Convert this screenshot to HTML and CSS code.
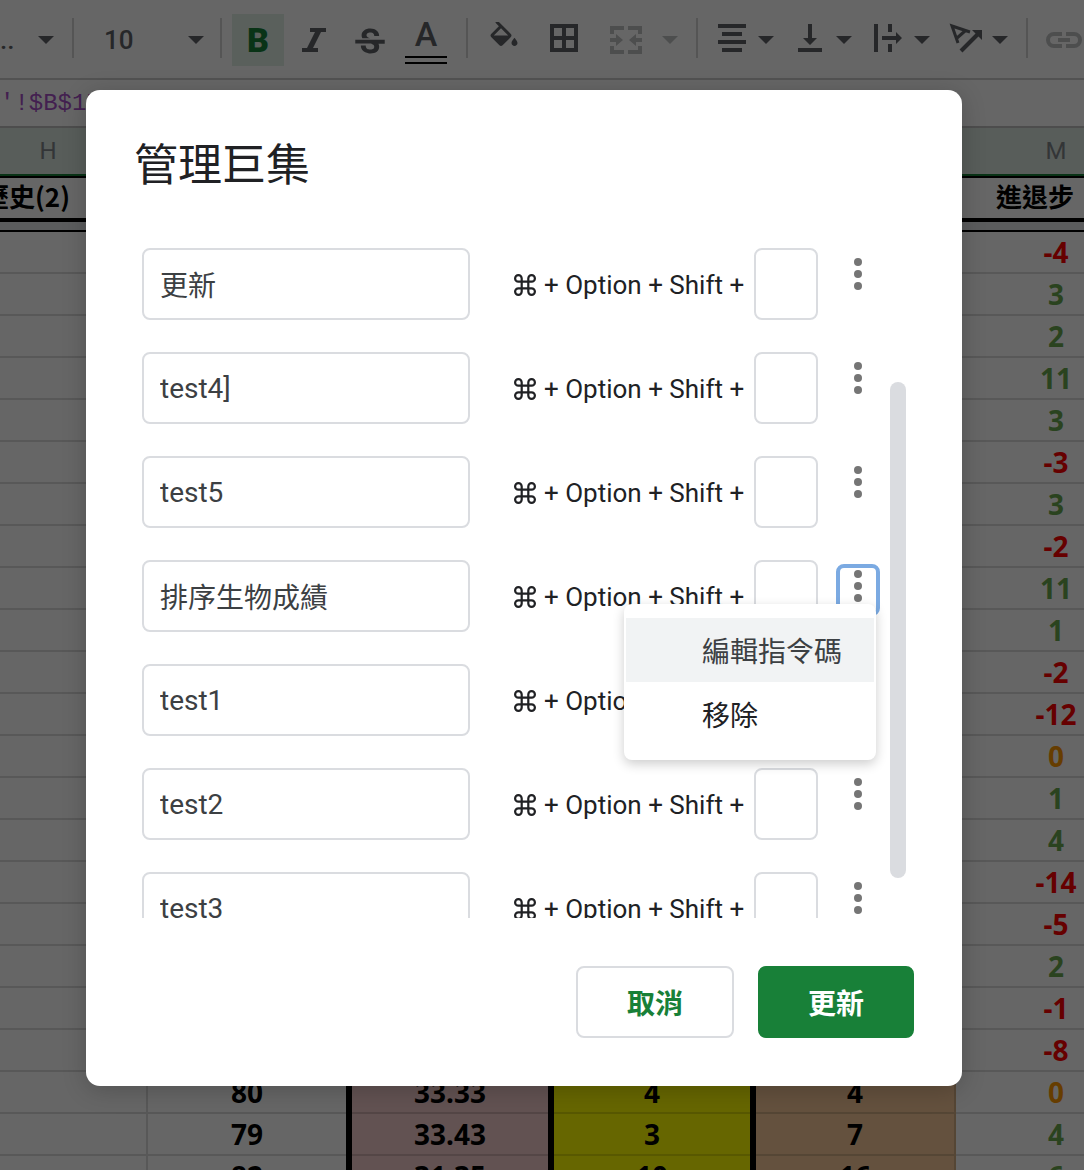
FILE: index.html
```html
<!DOCTYPE html>
<html lang="zh-Hant">
<head>
<meta charset="utf-8">
<meta name="viewport" content="width=device-width, initial-scale=1">
<title>管理巨集</title>
<link rel="stylesheet" href="styles.css">
</head>
<body>
<svg class="defs" aria-hidden="true">
  <symbol id="arrow" viewBox="0 0 16 8"><path d="M0 0h16L8 8z"/></symbol>
  <symbol id="dots" viewBox="0 0 8 32"><circle cx="4" cy="4" r="4"/><circle cx="4" cy="16" r="4"/><circle cx="4" cy="28" r="4"/></symbol>
  <symbol id="command" viewBox="2 2 20 20"><path fill="none" stroke="currentColor" stroke-width="2" d="M9 9v6h6V9zM9 9H6a3 3 0 1 1 3-3zM15 9V6a3 3 0 1 1 3 3zM15 15h3a3 3 0 1 1-3 3zM9 15v3a3 3 0 1 1-3-3z"/></symbol>
</svg>

<div class="app">
  <div class="toolbar">
    <button class="tool tool-font">..<svg class="arrow"><use href="#arrow"/></svg></button>
    <span class="sep"></span>
    <button class="tool tool-size">10<svg class="arrow"><use href="#arrow"/></svg></button>
    <span class="sep"></span>
    <div class="group group-tight">
      <button class="tool square bold">B</button>
      <button class="tool square" aria-label="斜體"><svg class="icon" viewBox="0 0 36 36"><path d="M14 6h16v4h-5l-8 16h5v4H6v-4h5l8-16h-5z"/></svg></button>
      <button class="tool square" aria-label="刪除線"><svg class="icon" viewBox="1 -1 22 22"><path d="M7.24 8.75c-.26-.48-.39-1.03-.39-1.67 0-.61.13-1.16.4-1.67.26-.5.63-.93 1.11-1.29.48-.35 1.05-.63 1.7-.83.66-.19 1.39-.29 2.18-.29.81 0 1.54.11 2.21.34.66.22 1.23.54 1.69.94.47.4.83.88 1.08 1.43s.38 1.15.38 1.81h-3.01c0-.31-.05-.59-.15-.85-.09-.27-.24-.49-.44-.68-.2-.19-.45-.33-.75-.44-.3-.1-.66-.16-1.06-.16-.39 0-.74.04-1.03.13s-.53.21-.72.36c-.19.16-.34.34-.44.55-.1.21-.15.43-.15.66 0 .48.25.88.74 1.21.38.25.77.48 1.41.7H7.39c-.05-.08-.11-.17-.15-.25zM21 12.200v-2.400H3v2.400h9.620c.18.07.4.14.55.2.37.17.66.34.87.51s.35.36.43.57c.07.2.11.43.11.69 0 .23-.05.45-.14.66-.09.2-.23.38-.42.53-.19.15-.42.26-.71.35-.29.08-.63.13-1.01.13-.43 0-.83-.04-1.18-.13s-.66-.23-.91-.42c-.25-.19-.45-.44-.59-.75s-.25-.76-.25-1.21H6.4c0 .55.08 1.13.24 1.58s.37.85.65 1.21c.28.35.6.66.98.92.37.26.78.48 1.22.65.44.17.9.3 1.38.39.48.08.96.13 1.44.13.8 0 1.53-.09 2.18-.28s1.21-.45 1.67-.79c.46-.34.82-.77 1.07-1.27s.38-1.07.38-1.71c0-.6-.1-1.14-.31-1.61-.05-.11-.11-.23-.17-.33H21z"/></svg></button>
      <button class="tool square color">A<span class="swatch"></span></button>
    </div>
    <span class="sep"></span>
    <div class="group group-fill">
      <button class="tool square" aria-label="填滿色彩"><svg class="icon" viewBox="0 1 24 24"><path d="M16.56 8.94L7.62 0 6.21 1.41l2.38 2.38-5.15 5.15c-.59.59-.59 1.54 0 2.12l5.5 5.5c.29.29.68.44 1.06.44s.77-.15 1.06-.44l5.5-5.5c.59-.58.59-1.53 0-2.12zM5.21 10L10 5.21 14.79 10H5.21zM19 11.5s-2 2.17-2 3.5c0 1.1.9 2 2 2s2-.9 2-2c0-1.33-2-3.5-2-3.5z"/></svg></button>
      <button class="tool square" aria-label="框線"><svg class="icon" viewBox="0 0 36 36"><path fill="none" stroke="currentColor" stroke-width="4" d="M6 4h24v24H6zM18 4v24M6 16h24"/></svg></button>
    </div>
    <button class="tool merge" disabled aria-label="合併儲存格"><svg class="icon" viewBox="0 0 36 36"><path d="M2 4h14v4H6v4H2zM20 4h14v8h-4V8H20zM2 24h4v4h10v4H2zM30 24h4v8H20v-4h10zM2 16h6v-4l7 6-7 6v-4H2zM34 16h-6v-4l-7 6 7 6v-4h6z"/></svg><svg class="arrow"><use href="#arrow"/></svg></button>
    <span class="sep"></span>
    <div class="group group-wide">
      <button class="tool drop" aria-label="水平對齊"><svg class="icon" viewBox="0 0 36 36"><path d="M4 2h28v4H4zM8 10h20v4H8zM4 18h28v4H4zM8 26h20v4H8z"/></svg><svg class="arrow"><use href="#arrow"/></svg></button>
      <button class="tool drop" aria-label="垂直對齊"><svg class="icon" viewBox="0 0 36 36"><path d="M16 2h4v14h5l-7 7-7-7h5zM6 26h24v4H6z"/></svg><svg class="arrow"><use href="#arrow"/></svg></button>
      <button class="tool drop" aria-label="文字換行"><svg class="icon" viewBox="0 0 36 36"><path d="M4 2h4v28H4zM18 2h4v8h-4zM18 22h4v8h-4zM12 14h14v-4l6 6-6 6v-4H12z"/></svg><svg class="arrow"><use href="#arrow"/></svg></button>
      <button class="tool drop" aria-label="文字旋轉"><svg class="icon" viewBox="0 0 36 36"><path fill="none" stroke="currentColor" stroke-width="3" d="M10 21L4 4l18 6M9 16l8-7"/><path fill="none" stroke="currentColor" stroke-width="4" d="M13 29l17-17"/><path d="M34 8v10L24 8z"/></svg><svg class="arrow"><use href="#arrow"/></svg></button>
    </div>
    <span class="sep"></span>
    <button class="tool square link" disabled aria-label="插入連結"><svg class="icon" viewBox="0 0 36 36"><path fill="none" stroke="currentColor" stroke-width="4" d="M16 12H8a6 6 0 0 0 0 12h8M20 12h8a6 6 0 0 1 0 12h-8M12 18h12"/></svg></button>
  </div>

  <div class="formula">'!$B$17</div>

  <table class="grid">
    <colgroup><col class="c-h"><col class="c-i"><col class="c-j"><col class="c-k"><col class="c-l"><col class="c-m"></colgroup>
    <thead>
      <tr class="letters"><th>H</th><th></th><th></th><th></th><th></th><th>M</th></tr>
      <tr class="titles"><th class="title-h">歷史(2)</th><th></th><th></th><th></th><th></th><th class="title-m">進退步</th></tr>
      <tr class="freeze"><th colspan="6"></th></tr>
    </thead>
    <tbody>
      <tr><td></td><td></td><td></td><td></td><td></td><td class="down">-4</td></tr>
      <tr><td></td><td></td><td></td><td></td><td></td><td class="up">3</td></tr>
      <tr><td></td><td></td><td></td><td></td><td></td><td class="up">2</td></tr>
      <tr><td></td><td></td><td></td><td></td><td></td><td class="up">11</td></tr>
      <tr><td></td><td></td><td></td><td></td><td></td><td class="up">3</td></tr>
      <tr><td></td><td></td><td></td><td></td><td></td><td class="down">-3</td></tr>
      <tr><td></td><td></td><td></td><td></td><td></td><td class="up">3</td></tr>
      <tr><td></td><td></td><td></td><td></td><td></td><td class="down">-2</td></tr>
      <tr><td></td><td></td><td></td><td></td><td></td><td class="up">11</td></tr>
      <tr><td></td><td></td><td></td><td></td><td></td><td class="up">1</td></tr>
      <tr><td></td><td></td><td></td><td></td><td></td><td class="down">-2</td></tr>
      <tr><td></td><td></td><td></td><td></td><td></td><td class="down">-12</td></tr>
      <tr><td></td><td></td><td></td><td></td><td></td><td class="same">0</td></tr>
      <tr><td></td><td></td><td></td><td></td><td></td><td class="up">1</td></tr>
      <tr><td></td><td></td><td></td><td></td><td></td><td class="up">4</td></tr>
      <tr><td></td><td></td><td></td><td></td><td></td><td class="down">-14</td></tr>
      <tr><td></td><td></td><td></td><td></td><td></td><td class="down">-5</td></tr>
      <tr><td></td><td></td><td></td><td></td><td></td><td class="up">2</td></tr>
      <tr><td></td><td></td><td></td><td></td><td></td><td class="down">-1</td></tr>
      <tr><td></td><td></td><td></td><td></td><td></td><td class="down">-8</td></tr>
      <tr><td></td><td>80</td><td>33.33</td><td>4</td><td>4</td><td class="same">0</td></tr>
      <tr><td></td><td>79</td><td>33.43</td><td>3</td><td>7</td><td class="up">4</td></tr>
      <tr><td></td><td>82</td><td>31.35</td><td>10</td><td>16</td><td class="up">6</td></tr>
    </tbody>
  </table>
</div>

<div class="scrim">
  <div class="dialog" role="dialog" aria-labelledby="dialog-title">
    <h1 class="dialog-title" id="dialog-title">管理巨集</h1>
    <div class="scroller">
      <ul class="macros">
        <li class="macro">
          <input class="name" type="text" value="更新" aria-label="巨集名稱">
          <label class="shortcut" for="key1"><svg class="cmd"><use href="#command"/></svg>+ Option + Shift +</label>
          <input class="key" id="key1" type="text" maxlength="1">
          <button class="more" aria-label="更多"><svg class="dots"><use href="#dots"/></svg></button>
        </li>
        <li class="macro">
          <input class="name" type="text" value="test4]" aria-label="巨集名稱">
          <label class="shortcut" for="key2"><svg class="cmd"><use href="#command"/></svg>+ Option + Shift +</label>
          <input class="key" id="key2" type="text" maxlength="1">
          <button class="more" aria-label="更多"><svg class="dots"><use href="#dots"/></svg></button>
        </li>
        <li class="macro">
          <input class="name" type="text" value="test5" aria-label="巨集名稱">
          <label class="shortcut" for="key3"><svg class="cmd"><use href="#command"/></svg>+ Option + Shift +</label>
          <input class="key" id="key3" type="text" maxlength="1">
          <button class="more" aria-label="更多"><svg class="dots"><use href="#dots"/></svg></button>
        </li>
        <li class="macro">
          <input class="name" type="text" value="排序生物成績" aria-label="巨集名稱">
          <label class="shortcut" for="key4"><svg class="cmd"><use href="#command"/></svg>+ Option + Shift +</label>
          <input class="key" id="key4" type="text" maxlength="1">
          <button class="more more-open" aria-label="更多" aria-expanded="true"><svg class="dots"><use href="#dots"/></svg></button>
          <div class="menu" role="menu">
            <button class="menu-item menu-item-active" role="menuitem">編輯指令碼</button>
            <button class="menu-item" role="menuitem">移除</button>
          </div>
        </li>
        <li class="macro">
          <input class="name" type="text" value="test1" aria-label="巨集名稱">
          <label class="shortcut" for="key5"><svg class="cmd"><use href="#command"/></svg>+ Option + Shift +</label>
          <input class="key" id="key5" type="text" maxlength="1">
          <button class="more" aria-label="更多"><svg class="dots"><use href="#dots"/></svg></button>
        </li>
        <li class="macro">
          <input class="name" type="text" value="test2" aria-label="巨集名稱">
          <label class="shortcut" for="key6"><svg class="cmd"><use href="#command"/></svg>+ Option + Shift +</label>
          <input class="key" id="key6" type="text" maxlength="1">
          <button class="more" aria-label="更多"><svg class="dots"><use href="#dots"/></svg></button>
        </li>
        <li class="macro">
          <input class="name" type="text" value="test3" aria-label="巨集名稱">
          <label class="shortcut" for="key7"><svg class="cmd"><use href="#command"/></svg>+ Option + Shift +</label>
          <input class="key" id="key7" type="text" maxlength="1">
          <button class="more" aria-label="更多"><svg class="dots"><use href="#dots"/></svg></button>
        </li>
      </ul>
      <div class="track"><div class="thumb"></div></div>
    </div>
    <div class="actions">
      <button class="action action-cancel">取消</button>
      <button class="action action-save">更新</button>
    </div>
  </div>
</div>
</body>
</html>
```

FILE: styles.css
```css
* {
  box-sizing: border-box;
}

body {
  margin: 0;
  position: relative;
  min-height: 100vh;
  font-family: Roboto, "Noto Sans CJK TC", sans-serif;
  color: #202124;
  background: #fff;
}

button,
input {
  font: inherit;
  color: inherit;
  margin: 0;
}

svg {
  display: block;
  flex: none;
  fill: currentColor;
}

.defs {
  position: absolute;
  width: 0;
  height: 0;
}

/* Spreadsheet behind the dialog */

.app {
  position: absolute;
  inset: 0;
  overflow: hidden;
}

.toolbar {
  display: flex;
  align-items: center;
  height: 80px;
  padding-top: 2px;
  overflow: hidden;
  border-bottom: 2px solid #ccc;
  color: #5f6368;
}

.tool {
  display: flex;
  flex: none;
  align-items: center;
  justify-content: space-between;
  height: 52px;
  padding: 0;
  border: 0;
  background: none;
  font-size: 26px;
  font-weight: 500;
}

.tool:disabled {
  color: #c0c2c4;
}

.tool-font {
  width: 72px;
  padding-right: 18px;
}

.tool-size {
  width: 146px;
  padding: 0 16px 0 30px;
}

.icon {
  width: 36px;
  height: 36px;
}

.arrow {
  width: 16px;
  height: 8px;
}

.sep {
  flex: none;
  width: 2px;
  height: 40px;
  margin-bottom: 4px;
  background: #d4d4d4;
}

.group {
  display: flex;
  flex: none;
}

.group-tight {
  gap: 4px;
  margin: 0 14px 0 10px;
}

.group-fill {
  gap: 8px;
  margin: 0 18px 0 10px;
}

.group-wide {
  gap: 18px;
  margin: 0 18px 0 16px;
}

.square {
  width: 52px;
  justify-content: center;
}

.bold {
  background: #e0f0e5;
  color: #188038;
  font-size: 34px;
  font-weight: 900;
}

.color {
  flex-direction: column;
  gap: 4px;
  font-size: 34px;
  line-height: 36px;
}

.swatch {
  width: 42px;
  height: 8px;
  border: solid #000;
  border-width: 2px 0;
}

.merge {
  width: 70px;
  margin-right: 18px;
}

.drop {
  width: 60px;
}

.link {
  margin-left: 10px;
}

.formula {
  height: 48px;
  border-bottom: 2px solid #c0c0c0;
  font: 24px/48px "Liberation Mono", monospace;
  color: #a851c8;
}

.grid {
  width: 1208px;
  margin-left: -52px;
  table-layout: fixed;
  border-collapse: separate;
  border-spacing: 0;
  font-family: "Noto Sans", "Noto Sans CJK TC", sans-serif;
  font-size: 28px;
  font-weight: 700;
  line-height: 40px;
  text-align: center;
  color: #000;
}

.c-h {
  width: 200px;
}

.c-i {
  width: 198px;
}

.c-j,
.c-k {
  width: 202px;
}

.c-l {
  width: 206px;
}

.c-m {
  width: 200px;
}

.grid th,
.grid td {
  padding: 0;
}

.letters th {
  height: 48px;
  border-bottom: 2px solid #188038;
  background: #dce8e0;
  font: 24px/46px Roboto, sans-serif;
  color: #80868b;
}

.titles th {
  height: 46px;
  border: solid #000;
  border-width: 2px 0 4px;
  font-family: "Noto Sans CJK TC", sans-serif;
  font-size: 26px;
  line-height: 36px;
  vertical-align: top;
}

.title-h {
  text-align: right;
}

.grid .title-h {
  padding-right: 78px;
}

.grid .title-m {
  padding-right: 42px;
}

.freeze th {
  height: 10px;
  border-bottom: 2px solid #000;
  background: #e4e6e8;
  line-height: 0;
}

.grid td {
  height: 42px;
  padding-bottom: 2px;
  box-shadow: inset 0 -2px rgba(0, 0, 0, .14);
}

.grid td:nth-child(1) {
  border-right: 2px solid rgba(0, 0, 0, .14);
}

.grid td:nth-child(3),
.grid td:nth-child(4),
.grid td:nth-child(5) {
  padding-left: 6px;
  box-shadow: inset 6px 0 #000, inset 0 -2px rgba(0, 0, 0, .14);
}

.grid td:nth-child(3) {
  background: #f4cccc;
}

.grid td:nth-child(4) {
  background: #ff0;
}

.grid td:nth-child(5) {
  border-right: 2px solid rgba(0, 0, 0, .14);
  background: #f9cb9c;
}

.up {
  color: #6aa84f;
}

.down {
  color: #f00;
}

.same {
  color: #f90;
}

/* Dialog */

.scrim {
  position: relative;
  display: flex;
  align-items: flex-start;
  min-height: 100vh;
  padding: 90px 122px 84px 86px;
  background: rgba(0, 0, 0, .6);
}

.dialog {
  flex: 1;
  min-width: 0;
  padding: 48px;
  border-radius: 14px;
  background: #fff;
  box-shadow: 0 4px 24px rgba(0, 0, 0, .2);
}

.dialog-title {
  margin: 0 0 22px;
  font-size: 44px;
  font-weight: 400;
  line-height: 56px;
}

.scroller {
  display: flex;
  gap: 10px;
  height: 702px;
  padding: 0 8px;
  overflow: hidden;
}

.macros {
  flex: 1;
  min-width: 0;
  margin: 0;
  padding: 0;
  list-style: none;
}

.macro {
  position: relative;
  display: flex;
  height: 72px;
  margin-top: 32px;
}

.name,
.key {
  height: 72px;
  border: 2px solid #dadce0;
  border-radius: 8px;
  background: #fff;
  color: #3c4043;
  font-size: 28px;
}

.name {
  flex: 1;
  min-width: 0;
  padding: 0 16px;
}

.key {
  flex: none;
  width: 64px;
  padding: 0 12px;
}

.shortcut {
  display: flex;
  flex: none;
  align-items: center;
  gap: 8px;
  width: 240px;
  margin-left: 44px;
  padding-top: 2px;
  font-size: 26px;
}

.cmd {
  width: 22px;
  height: 22px;
}

.more {
  flex: none;
  width: 44px;
  height: 52px;
  margin: 4px 0 0 18px;
  padding: 2px 14px 10px;
  border: 4px solid transparent;
  border-radius: 8px;
  background: none;
  color: #757575;
}

.more-open {
  border-color: #7baae2;
}

.dots {
  width: 8px;
  height: 32px;
}

.menu {
  position: absolute;
  z-index: 1;
  top: 44px;
  right: 4px;
  width: 252px;
  padding: 14px 2px;
  border-radius: 8px;
  background: #fff;
  box-shadow: 0 4px 12px rgba(0, 0, 0, .2);
}

.menu-item {
  display: block;
  width: 100%;
  height: 64px;
  padding: 0 0 0 76px;
  border: 0;
  background: none;
  font-size: 28px;
  text-align: left;
}

.menu-item-active {
  background: #f1f3f4;
  color: #3c4043;
}

.track {
  flex: none;
  width: 16px;
  padding-top: 166px;
}

.thumb {
  height: 496px;
  border-radius: 8px;
  background: #dadce0;
}

.actions {
  display: flex;
  justify-content: flex-end;
  gap: 24px;
  margin-top: 48px;
}

.action {
  width: 156px;
  height: 72px;
  border: 2px solid #188038;
  border-radius: 8px;
  background: #188038;
  color: #fff;
  font-size: 28px;
  font-weight: 700;
}

.action-cancel {
  width: 158px;
  border-color: #dadce0;
  background: #fff;
  color: #188038;
}
```
